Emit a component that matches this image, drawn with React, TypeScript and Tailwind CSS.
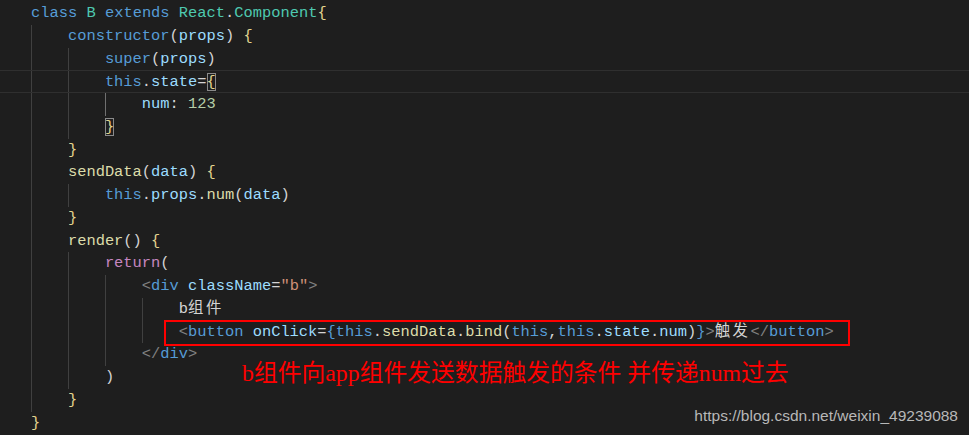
import React from "react";

// token colours (VS Code dark+)
const C = {
  kw: "text-[#569cd6]",
  type: "text-[#4ec9b0]",
  prop: "text-[#9cdcfe]",
  fn: "text-[#dcdcaa]",
  txt: "text-[#d4d4d4]",
  brace: "text-[#e3d48f]",
  num: "text-[#b5cea8]",
  str: "text-[#ce9178]",
  tag: "text-[#808080]",
  ret: "text-[#c586c0]",
};

type Tok = [string, string, boolean?]; // text, class, bracket-match box
type Line = { indent: number; guides: number; active?: number; toks: Tok[]; current?: boolean; boxed?: boolean };

const lines: Line[] = [
  { indent: 0, guides: 0, toks: [["class", C.kw], [" ", C.txt], ["B", C.type], [" ", C.txt], ["extends", C.kw], [" ", C.txt], ["React", C.type], [".", C.txt], ["Component", C.type], ["{", C.brace]] },
  { indent: 1, guides: 1, toks: [["constructor", C.kw], ["(", C.txt], ["props", C.prop], [")", C.txt], [" ", C.txt], ["{", C.brace]] },
  { indent: 2, guides: 2, toks: [["super", C.kw], ["(", C.txt], ["props", C.prop], [")", C.txt]] },
  { indent: 2, guides: 2, current: true, toks: [["this", C.kw], [".", C.txt], ["state", C.prop], ["=", C.txt], ["{", C.brace, true]] },
  { indent: 3, guides: 3, active: 2, toks: [["num", C.prop], [": ", C.txt], ["123", C.num]] },
  { indent: 2, guides: 2, toks: [["}", C.brace, true]] },
  { indent: 1, guides: 1, toks: [["}", C.brace]] },
  { indent: 1, guides: 1, toks: [["sendData", C.fn], ["(", C.txt], ["data", C.prop], [")", C.txt], [" ", C.txt], ["{", C.brace]] },
  { indent: 2, guides: 2, toks: [["this", C.kw], [".", C.txt], ["props", C.prop], [".", C.txt], ["num", C.fn], ["(", C.txt], ["data", C.prop], [")", C.txt]] },
  { indent: 1, guides: 1, toks: [["}", C.brace]] },
  { indent: 1, guides: 1, toks: [["render", C.fn], ["() ", C.txt], ["{", C.brace]] },
  { indent: 2, guides: 2, toks: [["return", C.ret], ["(", C.txt]] },
  { indent: 3, guides: 3, toks: [["<", C.tag], ["div", C.kw], [" ", C.txt], ["className", C.prop], ["=", C.txt], ['"b"', C.str], [">", C.tag]] },
  { indent: 4, guides: 4, toks: [["b", C.txt], ["组件", C.txt + " tracking-[2.5px]"]] },
  {
    indent: 4,
    guides: 4,
    boxed: true,
    toks: [
      ["<", C.tag], ["button", C.kw], [" ", C.txt], ["onClick", C.prop], ["=", C.txt], ["{", C.kw],
      ["this", C.kw], [".", C.txt], ["sendData", C.fn], [".", C.txt], ["bind", C.fn], ["(", C.txt],
      ["this", C.kw], [",", C.txt], ["this", C.kw], [".", C.txt], ["state", C.prop], [".", C.txt], ["num", C.prop],
      [")", C.txt], ["}", C.kw], [">", C.tag], ["触发", C.txt + " tracking-[2.5px]"], ["</", C.tag], ["button", C.kw], [">", C.tag],
    ],
  },
  { indent: 3, guides: 3, toks: [["</", C.tag], ["div", C.kw], [">", C.tag]] },
  { indent: 2, guides: 2, toks: [[")", C.txt]] },
  { indent: 1, guides: 1, toks: [["}", C.brace]] },
  { indent: 0, guides: 0, toks: [["}", C.brace]] },
];

function renderIndent(l: Line) {
  return Array.from({ length: l.indent }).map((_, i) => (
    <span
      key={i}
      className={
        "inline-block w-[4ch] h-full shrink-0 " +
        (i < l.guides ? (l.active === i ? "border-l border-[#707070]" : "border-l border-[#404040]") : "")
      }
    />
  ));
}

function renderTok(t: Tok, i: number) {
  if (t[2]) {
    return (
      <span key={i} className={t[1] + " outline outline-1 outline-[#8a8a8a] -outline-offset-1"}>
        {t[0]}
      </span>
    );
  }
  return (
    <span key={i} className={t[1]}>
      {t[0]}
    </span>
  );
}

export default function App() {
  return (
    <div className="relative w-[969px] h-[435px] overflow-hidden bg-[#1e1e1e]">
      <div className="pt-[2px] font-['Liberation_Mono',monospace] text-[15.4px] whitespace-pre">
        {lines.map((l, n) => (
          <div
            key={n}
            className={
              "relative flex items-stretch h-[22.78px] leading-[22.78px] pl-[31px] " +
              (l.current ? "border-y border-[#2f2f2f]" : "")
            }
          >
            {renderIndent(l)}
            <span className="font-['Liberation_Mono','Noto_Sans_CJK_SC',monospace]">{l.toks.map(renderTok)}</span>
            {l.boxed && (
              <div className="absolute left-[164px] top-[-1px] w-[686px] h-[26px] border-2 border-[#ff0000]" />
            )}
          </div>
        ))}
      </div>

      {/* annotation */}
      <div className="absolute left-[242px] top-[358px] text-[23.8px] leading-[30px] text-[#ff0000] font-['Liberation_Serif','Noto_Sans_CJK_SC',serif] whitespace-nowrap">
        b组件向app组件发送数据触发的条件 并传递num过去
      </div>

      {/* watermark */}
      <div className="absolute right-[11px] bottom-[8px] text-[15.5px] text-[#b8b8b8] font-['Liberation_Sans',sans-serif]">
        https://blog.csdn.net/weixin_49239088
      </div>
    </div>
  );
}
